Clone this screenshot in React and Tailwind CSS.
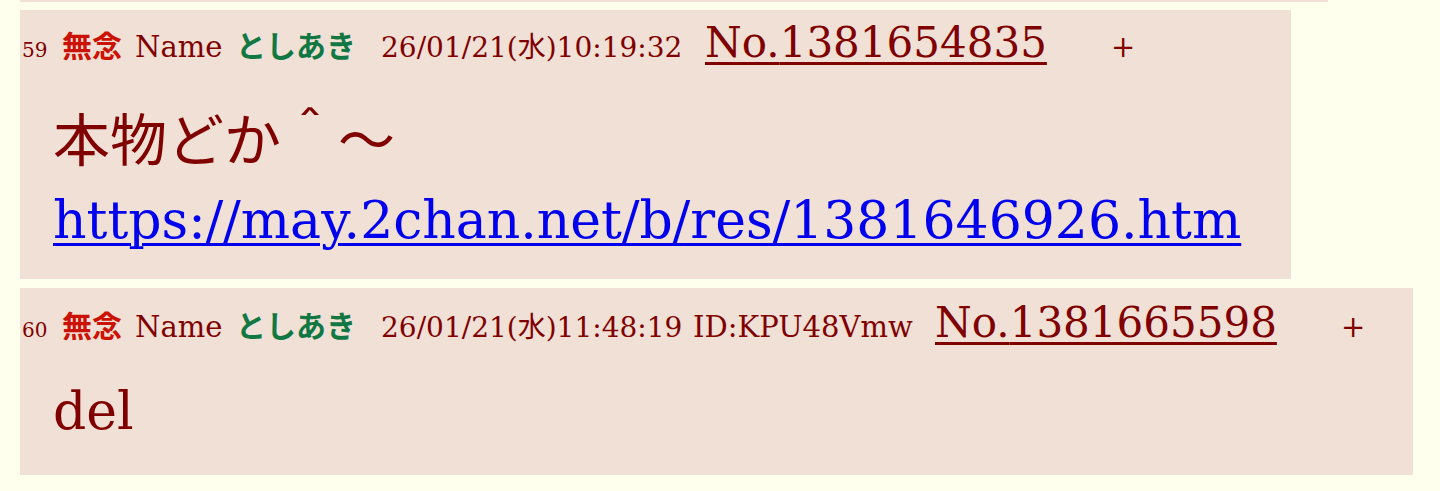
const serif = "font-['DejaVu_Serif','Noto_Sans_CJK_JP',serif]";
const jpBold = "font-['Noto_Sans_CJK_JP',sans-serif] font-bold";

function PostHeader({ num, date, id, no, top }) {
  return (
    <div className={`flex items-baseline leading-none text-[#800000] ${top}`}>
      <span className="w-[40px] shrink-0 text-[20px]">{num}</span>
      <span className={`w-[73px] shrink-0 text-[30px] text-[#cc1105] ${jpBold}`}>
        無念
      </span>
      <span className="w-[101px] shrink-0 text-[29px]">Name</span>
      <span className={`w-[145px] shrink-0 text-[30px] text-[#117743] ${jpBold}`}>
        としあき
      </span>
      <span
        className={`shrink-0 text-[28px] ${id ? "w-[312px]" : "w-[324px]"}`}
      >
        {date}
      </span>
      {id && (
        <span className="w-[242px] shrink-0 text-[29px]">{id}</span>
      )}
      <a
        href="#"
        className="w-[406px] shrink-0 text-[42px] underline decoration-[3px] underline-offset-[5px]"
      >
        No.{no}
      </a>
      <span className="text-[29px]">+</span>
    </div>
  );
}

export default function App() {
  return (
    <div className={`min-h-screen bg-[#ffffee] ${serif}`}>
      <div className="ml-[20px] h-[2px] w-[1308px] bg-[#f0e0d6]" />

      <div className="ml-[20px] mt-[8px] w-[1271px] bg-[#f0e0d6] pl-[2px] pb-[26px]">
        <PostHeader
          num="59"
          date="26/01/21(水)10:19:32"
          no="1381654835"
          top="pt-[12px]"
        />
        <div className="mt-[39px] ml-[31px] text-[52px] leading-[66px] text-[#800000]">
          <div className="mb-[18px] text-[57px] font-['Noto_Sans_CJK_JP',sans-serif] font-normal">
            本物どか＾～
          </div>
          <a
            href="#"
            className="text-[#0000ee] underline decoration-[3px] underline-offset-[5px]"
          >
            https://may.2chan.net/b/res/1381646926.htm
          </a>
        </div>
      </div>

      <div className="ml-[20px] mt-[9px] w-[1393px] bg-[#f0e0d6] pl-[2px] pb-[31px]">
        <PostHeader
          num="60"
          date="26/01/21(水)11:48:19"
          id="ID:KPU48Vmw"
          no="1381665598"
          top="pt-[14px]"
        />
        <div className="mt-[34px] ml-[31px] text-[52px] leading-[66px] text-[#800000]">
          del
        </div>
      </div>
    </div>
  );
}
